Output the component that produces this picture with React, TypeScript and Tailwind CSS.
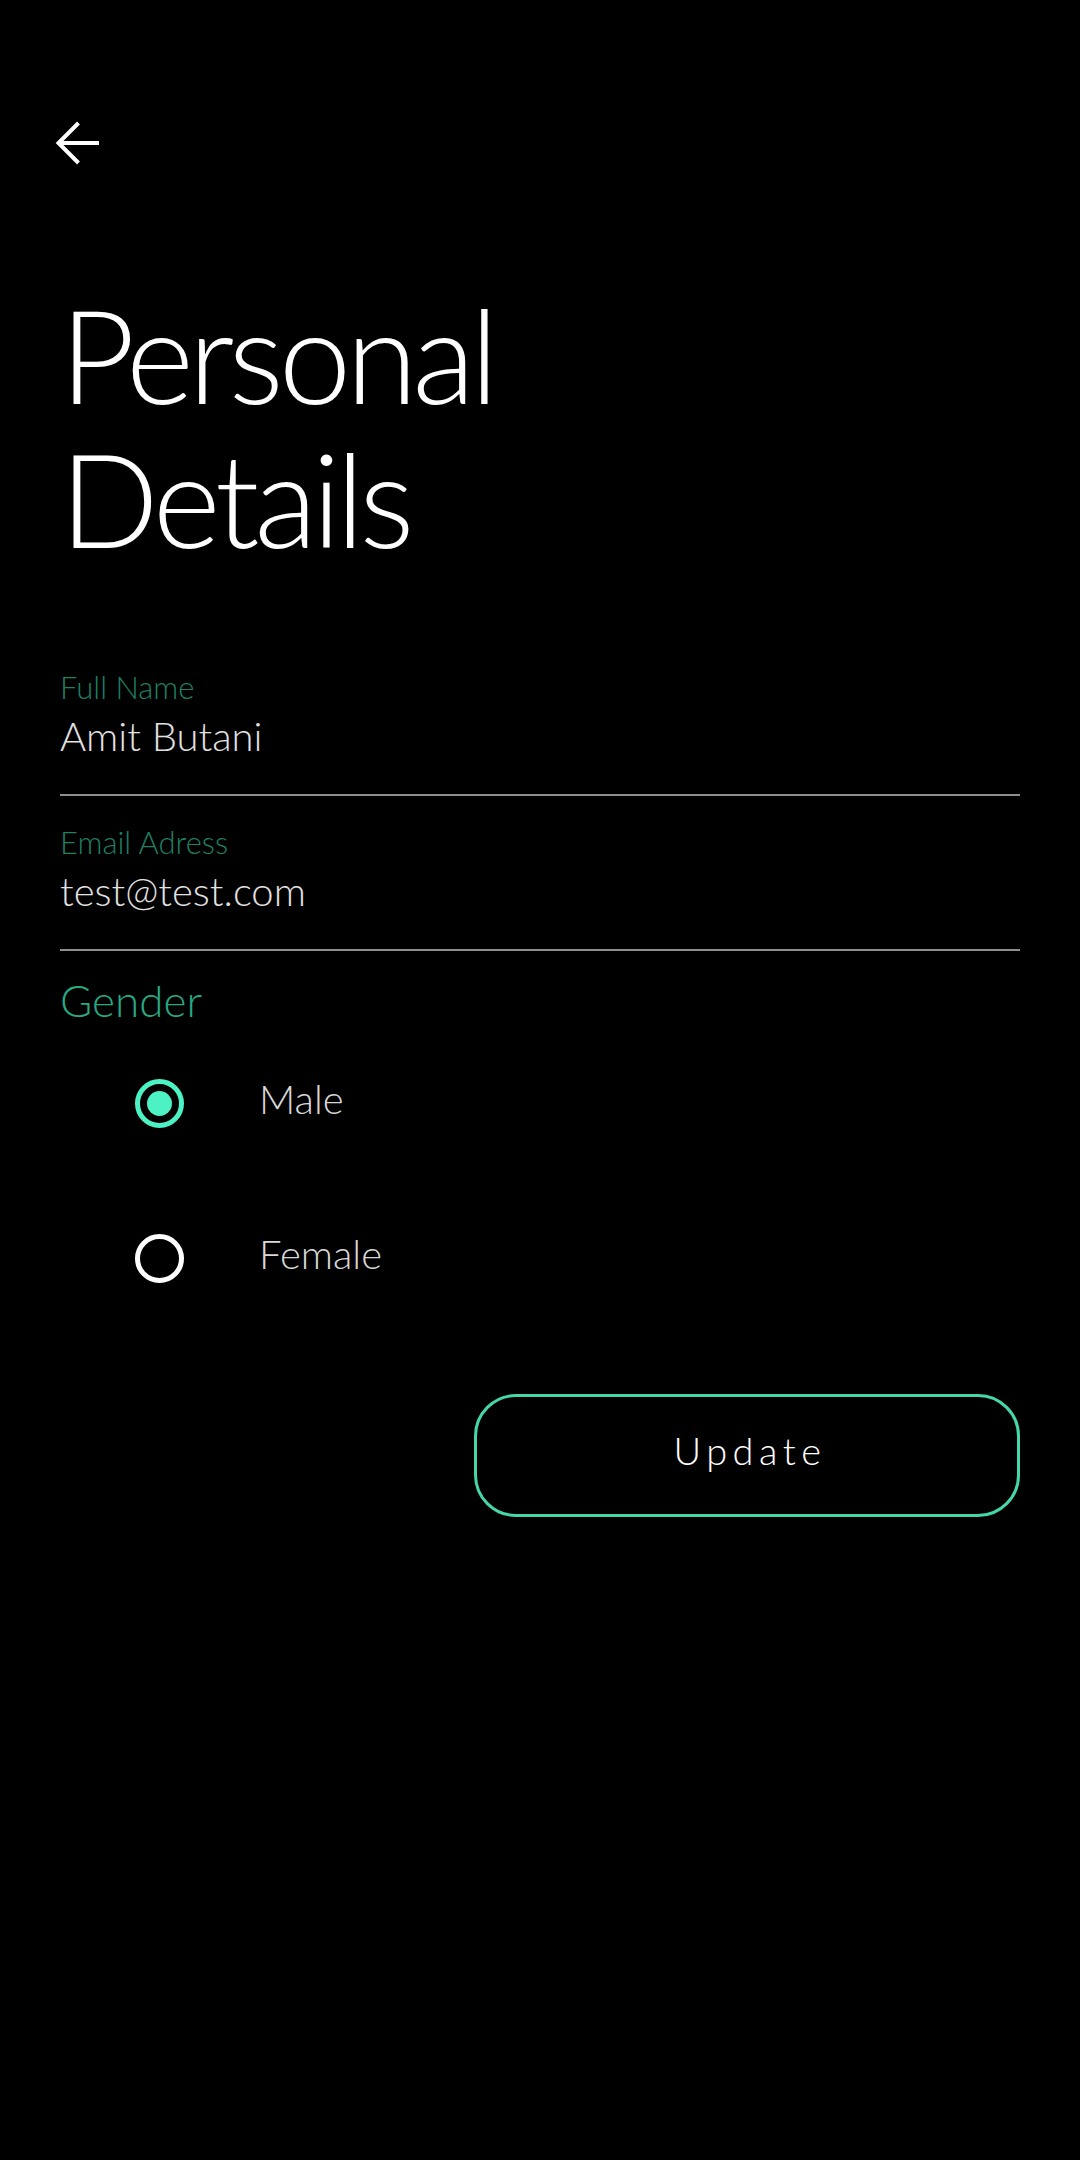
const fields = [
	{ label: 'Full Name', value: 'Amit Butani' },
	{ label: 'Email Adress', value: 'test@test.com' },
];

const genders = [
	{ name: 'Male', checked: true },
	{ name: 'Female', checked: false },
];

const BackArrow = () => (
	<svg width="44" height="44" viewBox="0 0 44 44" fill="none" stroke="white" strokeWidth="4">
		<path d="M3 22H44" />
		<path d="M23.5 2L3.5 22L23.5 42" />
	</svg>
);

const Radio = ({ checked }: { checked: boolean }) =>
	checked ? (
		<div className="flex h-[49px] w-[49px] items-center justify-center rounded-full border-[5px] border-[#4cf1c4]">
			<div className="h-[25px] w-[25px] rounded-full bg-[#4cf1c4]" />
		</div>
	) : (
		<div className="h-[49px] w-[49px] rounded-full border-[5px] border-white" />
	);

const App = () => {
	return (
		<div className="min-h-[2160px] bg-black font-['Lato',sans-serif] font-light">
			<div className="pl-[55px] pt-[121px]">
				<BackArrow />
			</div>

			<div className="flex flex-col px-[60px]">
				<h1 className="mt-[117px] text-[130px] font-light leading-[144px] tracking-[-0.04em] text-white">
					Personal
					<br />
					Details
				</h1>

				<div className="mt-[97px]">
					{fields.map((field, i) => (
						<div
							key={field.label}
							className={`border-b-2 border-[#8e8e8e] pb-[34px] ${i > 0 ? 'mt-[26px]' : ''}`}>
							<div className="text-[31px] leading-[40px] text-[#1f8063]">{field.label}</div>
							<div className="mt-[5px] text-[40px] leading-[48px] text-[#e2e2e2]">{field.value}</div>
						</div>
					))}
				</div>

				<div className="mt-[23px] text-[44px] leading-[52px] text-[#27a982]">Gender</div>

				{genders.map((g) => (
					<div key={g.name} className="flex h-[155px] items-center pl-[75px]">
						<Radio checked={g.checked} />
						<span className="mb-[9px] ml-[75px] text-[40px] leading-[48px] text-[#d8d8d8]">{g.name}</span>
					</div>
				))}

				<button className="mt-[58px] flex h-[123px] w-[546px] items-center justify-center self-end rounded-[42px] border-[3px] border-[#45d6aa] pb-[12px] pl-[6px] text-[38px] leading-[48px] tracking-[5.5px] text-white">
					Update
				</button>
			</div>
		</div>
	);
};

export default App;
